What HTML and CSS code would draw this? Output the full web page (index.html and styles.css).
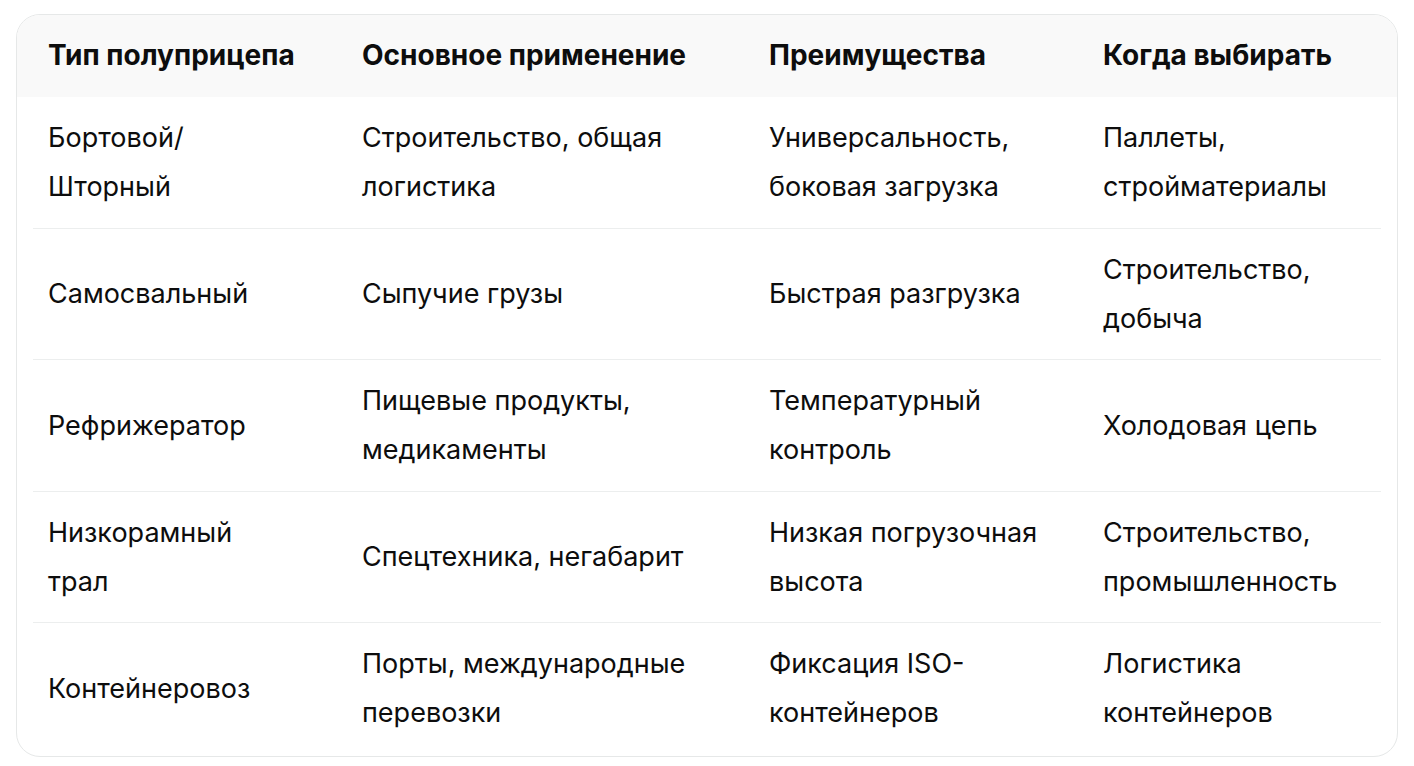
FILE: index.html
```html
<!DOCTYPE html>
<html lang="ru">
<head>
<meta charset="utf-8">
<title>Типы полуприцепов</title>
<link rel="stylesheet" href="styles.css">
</head>
<body>
<div class="table-wrap">
  <div class="row head">
    <div class="cell">Тип полуприцепа</div>
    <div class="cell">Основное применение</div>
    <div class="cell">Преимущества</div>
    <div class="cell">Когда выбирать</div>
  </div>
  <div class="row">
    <div class="cell">Бортовой/<br>Шторный</div>
    <div class="cell">Строительство, общая<br>логистика</div>
    <div class="cell">Универсальность,<br>боковая загрузка</div>
    <div class="cell">Паллеты,<br>стройматериалы</div>
  </div>
  <div class="row">
    <div class="cell">Самосвальный</div>
    <div class="cell">Сыпучие грузы</div>
    <div class="cell">Быстрая разгрузка</div>
    <div class="cell">Строительство,<br>добыча</div>
  </div>
  <div class="row">
    <div class="cell">Рефрижератор</div>
    <div class="cell">Пищевые продукты,<br>медикаменты</div>
    <div class="cell">Температурный<br>контроль</div>
    <div class="cell">Холодовая цепь</div>
  </div>
  <div class="row">
    <div class="cell">Низкорамный<br>трал</div>
    <div class="cell">Спецтехника, негабарит</div>
    <div class="cell">Низкая погрузочная<br>высота</div>
    <div class="cell">Строительство,<br>промышленность</div>
  </div>
  <div class="row last">
    <div class="cell">Контейнеровоз</div>
    <div class="cell">Порты, международные<br>перевозки</div>
    <div class="cell">Фиксация ISO-<br>контейнеров</div>
    <div class="cell">Логистика<br>контейнеров</div>
  </div>
</div>
</body>
</html>
```

FILE: styles.css
```css
* { box-sizing: border-box; }
html, body { margin: 0; background: #ffffff; }
body {
  padding: 14px 16px 10px 16px;
  font-family: Inter, "Noto Sans", "Liberation Sans", sans-serif;
  font-size: 27px;
  line-height: 49px;
  color: #0d0d0d;
}
.table-wrap {
  width: 1382px;
  border: 1px solid #e6e8e8;
  border-radius: 24px;
  overflow: hidden;
  background: #ffffff;
}
.row {
  display: grid;
  grid-template-columns: 314px 407px 334px 297px;
  align-items: center;
  margin: 0 16px;
  border-bottom: 1px solid #eceeee;
}
.row.last { border-bottom: none; padding-bottom: 2px; }
.row.head {
  margin: 0;
  padding: 0 16px;
  background: #f9f9f9;
  border-bottom: none;
  font-weight: 700;
  font-size: 28px;
}
.row.head .cell { padding: 16px 16px 17px 15px; }
.cell {
  padding: 16.25px 16px 16.25px 15px;
  white-space: nowrap;
}
```
